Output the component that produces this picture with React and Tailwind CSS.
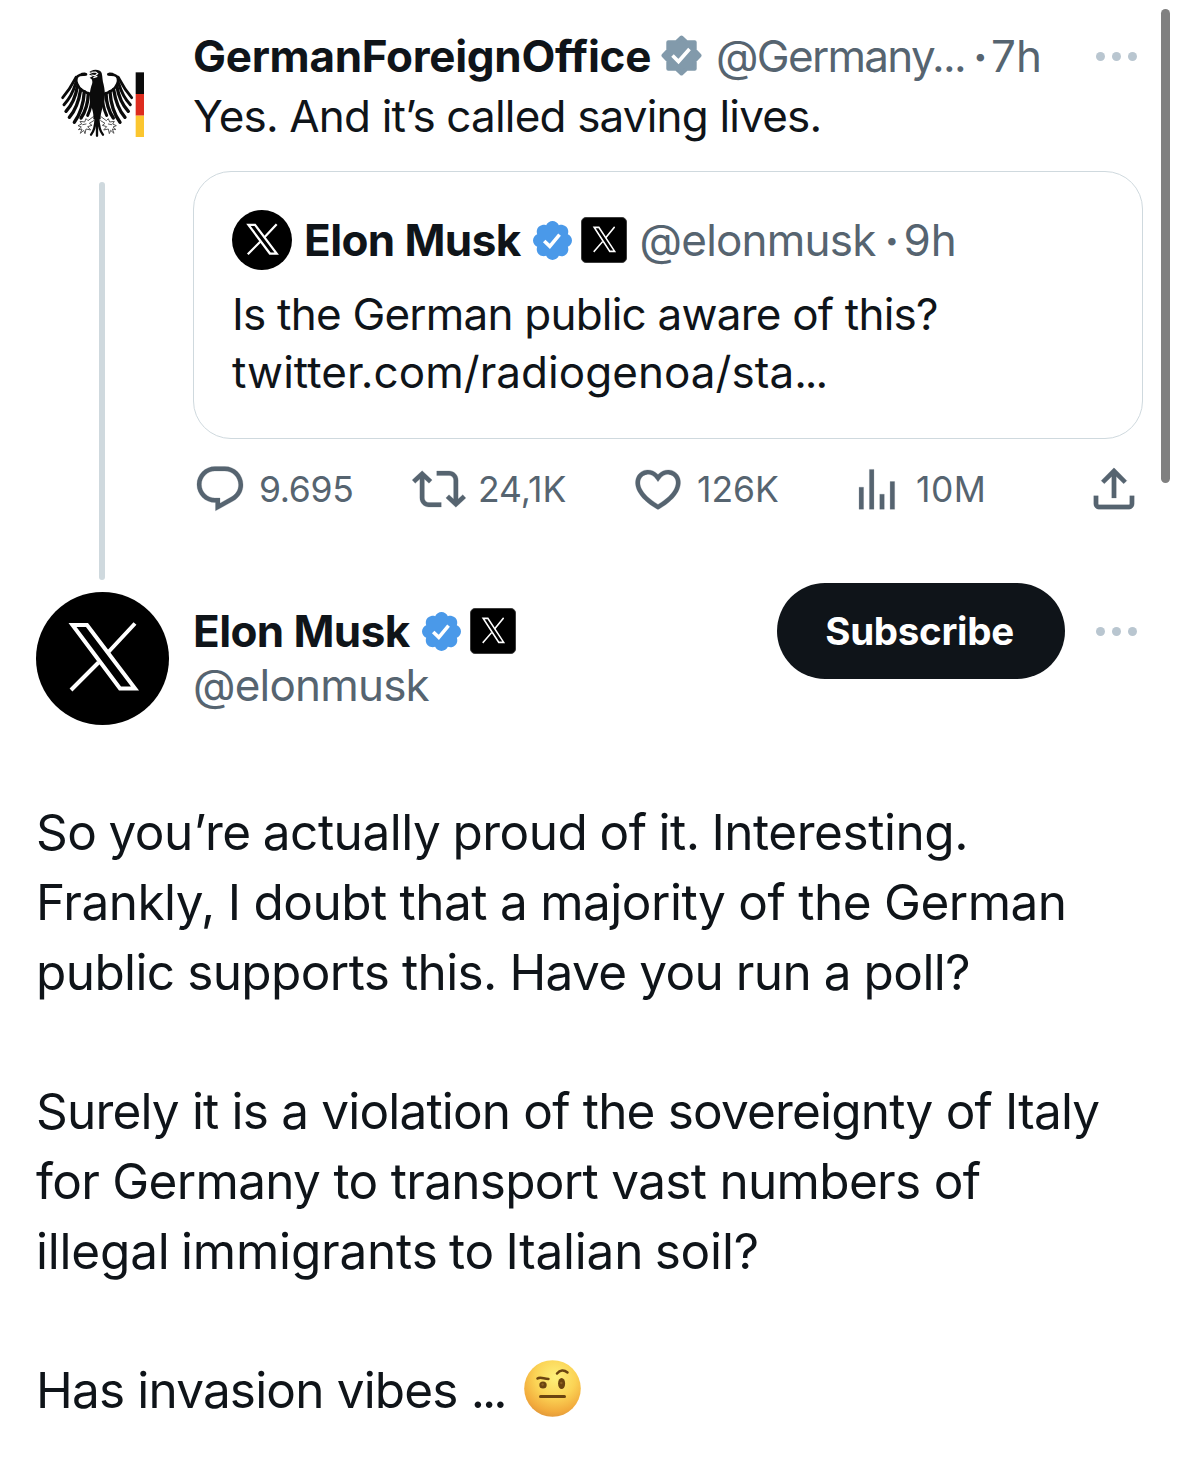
function XMark({ className, stroke = 4 }) {
  return (
    <svg viewBox="0 0 133 133" className={className} fill="none" stroke="#fff" strokeWidth={stroke}>
      <path d="M36.500 33H51L99 96.500H84Z" />
      <path d="M99 31.500L71.500 61M62.500 70.500L35 98" />
    </svg>
  );
}

function XAvatar({ className, stroke }) {
  return (
    <div className={`${className} shrink-0 overflow-hidden rounded-full bg-black`}>
      <XMark className="h-full w-full" stroke={stroke} />
    </div>
  );
}

function AffiliateBadge({ className }) {
  return (
    <div className={`${className} h-[46px] w-[46px] shrink-0 overflow-hidden rounded-[5px] border border-[#3d3d3d] bg-black`}>
      <XMark className="h-full w-full scale-x-[0.99] scale-y-[1.14]" stroke={4.5} />
    </div>
  );
}

function BlueCheck({ className }) {
  return (
    <svg viewBox="1.6 1.6 18.8 18.8" className={`${className} h-[39px] w-[39px] shrink-0`}>
      <path
        fill="#4a99e9"
        d="M20.396 11c-.018-.646-.215-1.275-.57-1.816-.354-.54-.852-.972-1.438-1.246.223-.607.27-1.264.14-1.897-.131-.634-.437-1.218-.882-1.687-.47-.445-1.053-.75-1.687-.882-.633-.13-1.29-.083-1.897.14-.273-.587-.704-1.086-1.245-1.44S11.647 1.62 11 1.604c-.646.017-1.273.213-1.813.568s-.969.854-1.24 1.44c-.608-.223-1.267-.272-1.902-.14-.635.13-1.22.436-1.69.882-.445.47-.749 1.055-.878 1.688-.13.633-.08 1.29.144 1.896-.587.274-1.087.705-1.443 1.245-.356.54-.555 1.17-.574 1.817.02.647.218 1.276.574 1.817.356.54.856.972 1.443 1.245-.224.606-.274 1.263-.144 1.896.13.634.433 1.218.877 1.688.47.443 1.054.747 1.687.878.633.132 1.29.084 1.897-.136.274.586.705 1.084 1.246 1.439.54.354 1.17.551 1.816.569.647-.016 1.276-.213 1.817-.567s.972-.854 1.245-1.44c.604.239 1.266.296 1.903.164.636-.132 1.22-.447 1.68-.907.46-.46.776-1.044.908-1.681s.075-1.299-.165-1.903c.586-.274 1.084-.705 1.439-1.246.354-.54.551-1.17.569-1.816z"
      />
      <path d="M7 11.200L9.700 13.800L14.400 8.200" fill="none" stroke="#fff" strokeWidth="1.700" />
    </svg>
  );
}

function GreyCheck({ className }) {
  return (
    <svg viewBox="0 0 41 41" className={`${className} h-[41px] w-[41px] shrink-0`}>
      <path
        fill="#829aab"
        stroke="#829aab"
        strokeWidth="4"
        strokeLinejoin="round"
        d="M20.500 2.500L25.500 7.300H33.700V15.500L38.500 20.500L33.700 25.500V33.700H25.500L20.500 38.500L15.500 33.700H7.300V25.500L2.500 20.500L7.300 15.500V7.300H15.500Z"
      />
      <path d="M11.500 20.500L17.500 26.500L28.500 14" fill="none" stroke="#fff" strokeWidth="3.600" />
    </svg>
  );
}

function Dots({ className }) {
  return (
    <div className={`${className} flex shrink-0 gap-[7px]`}>
      <span className="h-[9px] w-[9px] rounded-full bg-[#b9c6d0]" />
      <span className="h-[9px] w-[9px] rounded-full bg-[#b9c6d0]" />
      <span className="h-[9px] w-[9px] rounded-full bg-[#b9c6d0]" />
    </div>
  );
}

function Separator({ className }) {
  return (
    <span className={`${className} w-[10px] pt-[2px] text-center font-bold text-[#566470]`}>·</span>
  );
}

function Wing() {
  return (
    <g fill="none" stroke="#0b0b0b" strokeLinecap="round">
      <path d="M168 103L150 105C139 108 136 118 141 131C148 150 165 156 188 166" strokeWidth="8" />
      <path d="M164 102L156 103" strokeWidth="9" />
      <path d="M138 112C131 125 122 146 98 173" strokeWidth="8.500" />
      <path d="M137 130C131 150 121 174 102 194" strokeWidth="9" />
      <path d="M142 140C138 165 128 192 108 214" strokeWidth="10" />
      <path d="M152 149C147 180 139 208 118 232" strokeWidth="10" />
      <path d="M163 155C161 187 151 222 133 247" strokeWidth="10" />
      <path d="M175 160C174 190 168 212 153 234" strokeWidth="10" />
      <path d="M185 166C186 190 183 205 173 226" strokeWidth="9" />
    </g>
  );
}

function Talon() {
  return (
    <g fill="none" stroke="#555" strokeWidth="3" strokeLinecap="round" strokeLinejoin="round">
      <path d="M190 230L174 242L168 236L164 246L150 244L155 252L144 257L154 261L145 269L156 267L151 280L161 271L165 281L168 267L182 270L173 260L186 256L178 250L191 242" />
      <path d="M158 254L168 252" />
    </g>
  );
}

function FederalEagle() {
  return (
    <svg viewBox="18 -15 399 399" className="h-[133px] w-[133px] shrink-0">
      <Wing />
      <g transform="translate(403 0) scale(-1 1)">
        <Wing />
      </g>
      <Talon />
      <g transform="translate(403 0) scale(-1 1)">
        <Talon />
      </g>
      <path fill="#0b0b0b" d="M184 92C194 87 211 88 215 99C218 112 217 122 221 134C227 160 225 180 218 202C213 218 211 228 212 238H190C191 228 190 218 185 202C177 180 178 158 184 138C188 130 188 124 185 118L179 113L188 109L177 103L186 100L178 96Z" />
      <path d="M184 97L197 96L203 101L195 107L184 105M190 113L202 109" fill="none" stroke="#fff" strokeWidth="3.500" />
      <path
        fill="none"
        stroke="#0b0b0b"
        strokeWidth="7"
        strokeLinecap="round"
        d="M201 230V287M197 234C196 258 194 272 183 284M205 234C206 258 208 272 219 284"
      />
      <path fill="#0b0b0b" d="M317 97H342V162H317Z" />
      <path fill="#dd2c1e" d="M317 162H342V227H317Z" />
      <path fill="#fbc62f" d="M317 227H342V291H317Z" />
    </svg>
  );
}

const ICONS = {
  reply:
    "M1.751 10c0-4.42 3.584-8 8.005-8h4.366c4.49 0 8.129 3.64 8.129 8.13 0 2.96-1.607 5.68-4.196 7.11l-8.054 4.46v-3.69h-.067c-4.49.1-8.183-3.51-8.183-8.01zm8.005-6c-3.317 0-6.005 2.69-6.005 6 0 3.37 2.77 6.08 6.138 6.01l.351-.01h1.761v2.3l5.087-2.81c1.951-1.08 3.163-3.13 3.163-5.36 0-3.39-2.744-6.13-6.129-6.13H9.756z",
  repost:
    "M4.5 3.88l4.432 4.14-1.364 1.46L5.5 7.55V16c0 1.1.896 2 2 2H13v2H7.5c-2.209 0-4-1.79-4-4V7.55L1.432 9.48.068 8.02 4.5 3.88zM16.5 6H11V4h5.500c2.209 0 4 1.790 4 4v8.450l2.068-1.930 1.364 1.460-4.432 4.140-4.432-4.140 1.364-1.460 2.068 1.930V8c0-1.100-.896-2-2-2z",
  like:
    "M16.697 5.5c-1.222-.06-2.679.51-3.89 2.16l-.805 1.09-.806-1.09C9.984 6.01 8.526 5.44 7.304 5.5c-1.243.07-2.349.78-2.91 1.91-.552 1.12-.633 2.78.479 4.82 1.074 1.97 3.257 4.27 7.129 6.61 3.87-2.34 6.052-4.64 7.126-6.61 1.111-2.04 1.03-3.7.477-4.82-.561-1.13-1.666-1.84-2.908-1.91zm4.187 7.69c-1.351 2.48-4.001 5.12-8.379 7.67l-.503.3-.504-.3c-4.379-2.55-7.029-5.19-8.382-7.67-1.36-2.5-1.41-4.86-.514-6.67.887-1.79 2.647-2.91 4.601-3.01 1.651-.09 3.368.56 4.798 2.01 1.429-1.45 3.146-2.1 4.796-2.01 1.954.1 3.714 1.22 4.601 3.01.896 1.81.846 4.17-.514 6.67z",
  views:
    "M2.700 11.200h2v9.800h-2zM7.300 3.300h2v17.700h-2zM11.900 14.300h2v6.700h-2zM16.500 8.700h2v12.300h-2z",
  share:
    "M12 2.59l5.7 5.7-1.41 1.42L13 6.41V16h-2V6.41l-3.3 3.3-1.41-1.42L12 2.59zM21 15l-.02 3.51c0 1.38-1.12 2.49-2.5 2.49H5.5C4.11 21 3 19.88 3 18.5V15h2v3.5c0 .28.22.5.5.5h12.98c.28 0 .5-.22.5-.5L19 15h2z",
};

function Action({ icon, count, gap = "ml-[12px]", shift = "", tracking = "" }) {
  return (
    <div className="flex h-[54px] items-center text-[35.5px] leading-none text-[#566470]">
      <svg viewBox="0 0 24 24" className={`${shift} h-[54px] w-[54px] shrink-0`} fill="#566470" stroke="#566470" strokeWidth="0.1">
        <path d={ICONS[icon]} />
      </svg>
      {count && <span className={`${gap} ${tracking} pt-[2px]`}>{count}</span>}
    </div>
  );
}

function SkepticalFace() {
  return (
    <svg viewBox="0 0 57 57" className="ml-[19px] inline-block h-[57px] w-[57px] -translate-y-[3px]">
      <defs>
        <radialGradient id="face" cx="0.55" cy="0.3" r="0.72">
          <stop offset="0" stopColor="#fdf07a" />
          <stop offset="0.5" stopColor="#fbd355" />
          <stop offset="0.85" stopColor="#f2ab3c" />
          <stop offset="1" stopColor="#e1983a" />
        </radialGradient>
      </defs>
      <circle cx="28.500" cy="28.500" r="28.300" fill="url(#face)" />
      <ellipse cx="19" cy="25" rx="3.700" ry="3.600" fill="#6b4410" />
      <ellipse cx="37.600" cy="23.500" rx="3.500" ry="5.600" fill="#6b4410" />
      <circle cx="18.600" cy="24.500" r="1.200" fill="#8f6220" />
      <circle cx="37.300" cy="23" r="1.200" fill="#8f6220" />
      <g fill="none" stroke="#6b4410" strokeLinecap="round">
        <path d="M13.500 18.500C16 16.500 19 18.500 24.500 19" strokeWidth="2.500" />
        <path d="M33 13.500C36 9.800 40 9.500 43.500 12.500" strokeWidth="2.500" />
        <path d="M16.500 36.500H40.500" strokeWidth="3" />
      </g>
    </svg>
  );
}

export default function App() {
  return (
    <div className="relative h-[1479px] w-[1179px] overflow-hidden bg-white pl-9 font-['Inter',sans-serif] text-[#0f1419]">
      <div className="absolute left-[1161px] top-[9px] h-[474px] w-[9px] rounded-full bg-[#808080]" />

      <article className="flex h-[583px]">
        <div className="flex w-[133px] shrink-0 flex-col items-center pt-[35px]">
          <FederalEagle />
          <div className="mr-px mt-[14px] h-[398px] w-[6px] rounded-full bg-[#cfd9de]" />
        </div>
        <div className="ml-6 w-[950px] whitespace-nowrap pt-[26px] text-[44px] leading-[58px]">
          <div className="flex h-[60px] items-center">
            <span className="font-bold tracking-[-0.3px]">GermanForeignOffice</span>
            <GreyCheck className="-mt-px ml-[10px]" />
            <span className="ml-[14px] tracking-[-1.7px] text-[#566470]">@Germany...</span>
            <Separator className="ml-[8px]" />
            <span className="ml-[8px] text-[#566470]">7h</span>
            <Dots className="ml-auto mr-[6px]" />
          </div>
          <p className="mt-px tracking-[-0.82px]">Yes. And it’s called saving lives.</p>

          <div className="mt-[26px] h-[268px] rounded-[38px] border border-[#cfd9de] px-[38px] pt-[38px]">
            <div className="flex h-[60px] items-center">
              <XAvatar className="h-[60px] w-[60px]" stroke={5} />
              <span className="ml-[12px] font-bold tracking-[-0.6px]">Elon Musk</span>
              <BlueCheck className="ml-[12px]" />
              <AffiliateBadge className="ml-[9px]" />
              <span className="ml-[13px] tracking-[-0.8px] text-[#566470]">@elonmusk</span>
              <Separator className="ml-[9px]" />
              <span className="ml-[9px] text-[#566470]">9h</span>
            </div>
            <p className="mt-[15px] tracking-[-0.78px]">Is the German public aware of this?</p>
            <p className="tracking-[0.05px]">
              twitter.com/radiogenoa/sta<span className="tracking-[-2px]">...</span>
            </p>
          </div>

          <div className="mt-[23px] grid grid-cols-[220px_218px_222px_234px_54px]">
            <Action icon="reply" count="9.695" tracking="tracking-[-0.3px]" />
            <Action icon="repost" count="24,1K" shift="-ml-px" />
            <Action icon="like" count="126K" />
            <Action icon="views" count="10M" gap="ml-[9px]" tracking="tracking-[0.5px]" />
            <Action icon="share" />
          </div>
        </div>
      </article>

      <header className="flex h-[142px] items-start whitespace-nowrap">
        <XAvatar className="mt-[9px] h-[133px] w-[133px]" />
        <div className="ml-6 mt-[21px] text-[44px] leading-[54px]">
          <div className="flex h-[54px] items-center">
            <span className="font-bold tracking-[-0.6px]">Elon Musk</span>
            <BlueCheck className="ml-[12px]" />
            <AffiliateBadge className="ml-[9px]" />
          </div>
          <div className="tracking-[-0.8px] text-[#566470]">@elonmusk</div>
        </div>
        <div className="ml-auto mr-[42px] flex h-[96px] items-center">
          <button className="h-[96px] w-[288px] rounded-full bg-[#0f1419] pr-[3px] pt-[2px] text-[38.5px] font-bold tracking-[-0.3px] text-white">
            Subscribe
          </button>
          <Dots className="ml-[31px]" />
        </div>
      </header>

      <div className="mt-[73px] whitespace-nowrap text-[49.5px] leading-[69.8px]">
        <p className="tracking-[-0.46px] [word-spacing:-1.5px]">So you’re actually proud of it. Interesting.</p>
        <p className="tracking-[-0.5px] [word-spacing:-0.5px]">Frankly, I doubt that a majority of the German</p>
        <p className="tracking-[-0.6px] [word-spacing:-0.7px]">public supports this. Have you run a poll?</p>
        <p className="mt-[69.8px] tracking-[-0.82px]">Surely it is a violation of the sovereignty of Italy</p>
        <p className="tracking-[-0.69px]">for Germany to transport vast numbers of</p>
        <p className="tracking-[-0.2px] [word-spacing:-2.3px]">illegal immigrants to Italian soil?</p>
        <p className="mt-[69.8px] flex items-center tracking-[-0.83px]">
          <span>
            Has invasion vibes <span className="tracking-[-3px]">...</span>
          </span>
          <SkepticalFace />
        </p>
      </div>
    </div>
  );
}
